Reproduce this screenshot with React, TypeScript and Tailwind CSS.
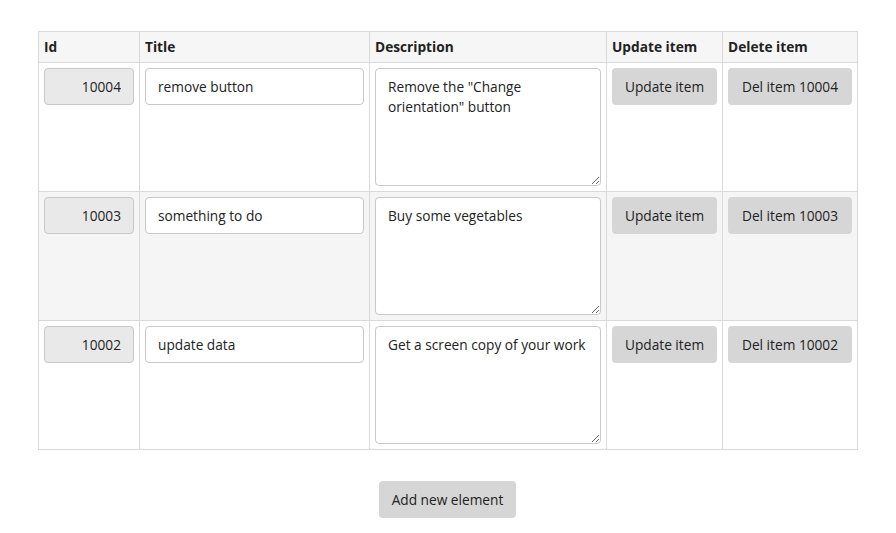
import React from 'react';

interface Item {
  id: number;
  title: string;
  description: string;
}

const items: Item[] = [
  { id: 10004, title: 'remove button', description: 'Remove the "Change orientation" button' },
  { id: 10003, title: 'something to do', description: 'Buy some vegetables' },
  { id: 10002, title: 'update data', description: 'Get a screen copy of your work' },
];

export default function App() {
  return (
    <div className="min-h-screen bg-white pt-[31px] text-[13.7px] text-[#222]" style={{ fontFamily: '"Open Sans", "Noto Sans", sans-serif' }}>
      <table className="ml-[38px] w-[819px] table-fixed border-collapse border border-[#d9d9d9]">
        <colgroup>
          <col className="w-[101px]" />
          <col className="w-[230px]" />
          <col className="w-[237px]" />
          <col className="w-[116px]" />
          <col className="w-[135px]" />
        </colgroup>
        <thead>
          <tr className="bg-[#f6f6f6]">
            <th className="h-[31px] border border-[#d9d9d9] px-[5px] pt-[1px] text-left font-bold">Id</th>
            <th className="border border-[#d9d9d9] px-[5px] pt-[1px] text-left font-bold">Title</th>
            <th className="border border-[#d9d9d9] px-[5px] pt-[1px] text-left font-bold">Description</th>
            <th className="border border-[#d9d9d9] px-[5px] pt-[1px] text-left font-bold">Update item</th>
            <th className="border border-[#d9d9d9] px-[5px] pt-[1px] text-left font-bold">Delete item</th>
          </tr>
        </thead>
        <tbody>
          {items.map((item, i) => (
            <tr key={item.id} className={i % 2 === 1 ? 'bg-[#f5f5f5]' : 'bg-white'}>
              <td className="h-[129px] border border-[#d9d9d9] p-[5px] align-top">
                <input
                  disabled
                  value={item.id}
                  className="h-[37px] w-full rounded-[4px] border border-[#c8c8c8] bg-[#e9e9e9] px-3 text-right text-[#222]"
                />
              </td>
              <td className="border border-[#d9d9d9] p-[5px] align-top">
                <input
                  defaultValue={item.title}
                  className="h-[37px] w-full rounded-[4px] border border-[#c8c8c8] bg-white px-3"
                />
              </td>
              <td className="border border-[#d9d9d9] p-[5px] align-top">
                <textarea
                  defaultValue={item.description}
                  className="block h-[118px] w-full resize-y rounded-[4px] border border-[#c8c8c8] bg-white py-[8px] pl-3 pr-2 leading-[20px]"
                />
              </td>
              <td className="border border-[#d9d9d9] p-[5px] align-top">
                <button className="h-[37px] w-full rounded-[4px] bg-[#d6d6d6] px-3 pt-[1px]">Update item</button>
              </td>
              <td className="border border-[#d9d9d9] p-[5px] align-top">
                <button className="h-[37px] w-full rounded-[4px] bg-[#d6d6d6] px-3 pt-[1px]">Del item {item.id}</button>
              </td>
            </tr>
          ))}
        </tbody>
      </table>
      <div className="ml-[38px] mt-[31px] flex w-[819px] justify-center">
        <button className="h-[37px] rounded-[4px] bg-[#d6d6d6] px-[13px] pt-[1px]">Add new element</button>
      </div>
    </div>
  );
}
